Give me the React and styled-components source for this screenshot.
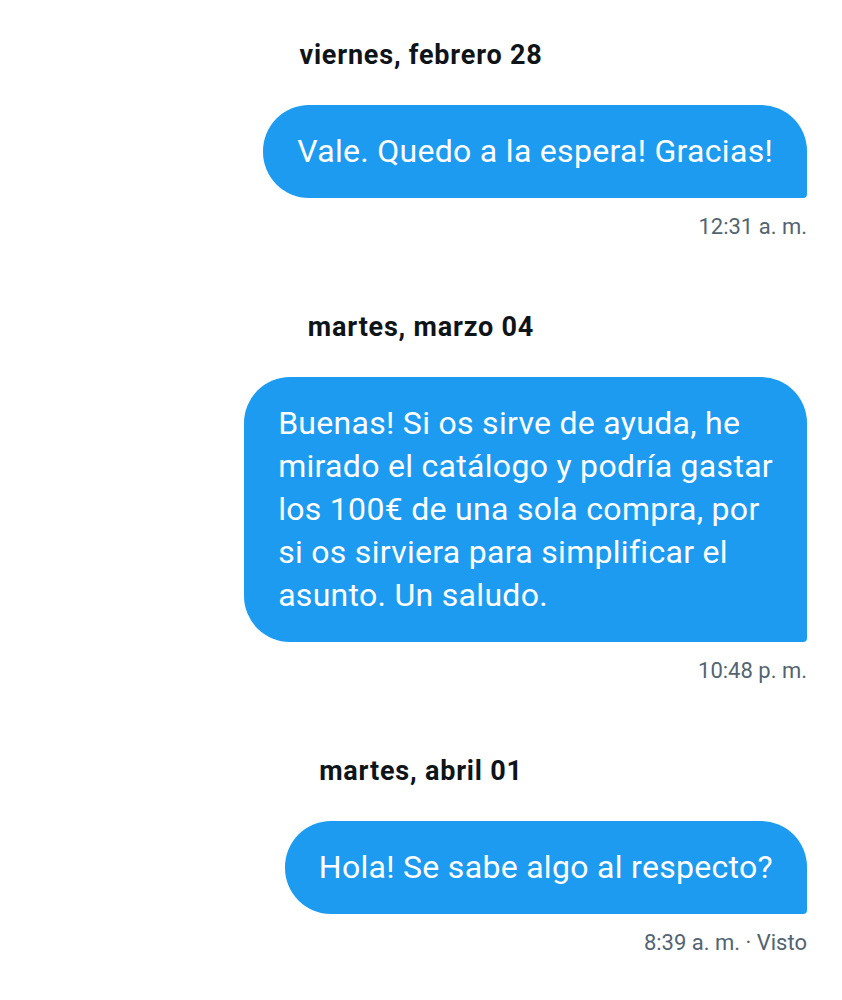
import React from "react"
import styled, { createGlobalStyle } from "styled-components"

const GlobalStyle = createGlobalStyle`
  html, body {
    margin: 0;
    padding: 0;
    background: #ffffff;
  }
  body {
    font-family: Roboto, "Noto Sans", "Liberation Sans", sans-serif;
  }
`

const Page = styled.div`
  width: 842px;
  min-height: 1000px;
  box-sizing: border-box;
  padding: 39px 35px 0 0;
  display: flex;
  flex-direction: column;
  gap: 70px;
`

const Day = styled.section`
  display: flex;
  flex-direction: column;
  align-items: flex-end;
`

const DateLabel = styled.h2`
  align-self: stretch;
  margin: 0 0 34px 35px;
  text-align: center;
  font-size: 27px;
  line-height: 32px;
  font-weight: 700;
  letter-spacing: 0.8px;
  color: #0f1419;
`

const Bubble = styled.div`
  box-sizing: border-box;
  max-width: ${({ $max }) => $max || 580}px;
  padding: 25px 34px 25px 34px;
  background: #1d9bf0;
  color: #ffffff;
  font-size: 32px;
  line-height: 43px;
  letter-spacing: 0.3px;
  border-radius: 46px 46px 4px 46px;
  white-space: pre-line;
`

const Stamp = styled.div`
  margin-top: 15px;
  font-size: 22px;
  line-height: 28px;
  color: #536471;
`

const days = [
  {
    date: "viernes, febrero 28",
    text: "Vale. Quedo a la espera! Gracias!",
    time: "12:31 a. m.",
  },
  {
    date: "martes, marzo 04",
    text:
      "Buenas! Si os sirve de ayuda, he\nmirado el catálogo y podría gastar\nlos 100€ de una sola compra, por\nsi os sirviera para simplificar el\nasunto. Un saludo.",
    time: "10:48 p. m.",
  },
  {
    date: "martes, abril 01",
    text: "Hola! Se sabe algo al respecto?",
    time: "8:39 a. m. · Visto",
  },
]

const App = () => (
  <>
    <GlobalStyle />
    <Page>
      {days.map(d => (
        <Day key={d.date}>
          <DateLabel>{d.date}</DateLabel>
          <Bubble>{d.text}</Bubble>
          <Stamp>{d.time}</Stamp>
        </Day>
      ))}
    </Page>
  </>
)

export default App
